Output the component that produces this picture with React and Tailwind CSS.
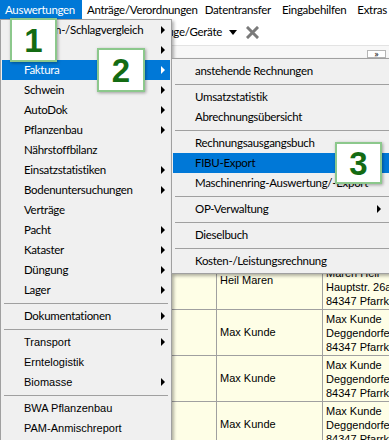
import React from "react";

const SEGOE = "font-['Lato','Noto_Sans',sans-serif] text-[11.5px] tracking-[-0.3px]";
const TAHOMA = "font-['Liberation_Sans',Arial,sans-serif] text-[11px]";

const mainItems = [
  { t: "Flächen-/Schlagvergleich", a: true },
  { t: "Rind", a: true },
  { t: "Faktura", a: true, hl: true },
  { t: "Schwein", a: true },
  { t: "AutoDok", a: true },
  { t: "Pflanzenbau", a: true },
  { t: "Nährstoffbilanz" },
  { t: "Einsatzstatistiken", a: true },
  { t: "Bodenuntersuchungen", a: true },
  { t: "Verträge" },
  { t: "Pacht", a: true },
  { t: "Kataster", a: true },
  { t: "Düngung", a: true },
  { t: "Lager", a: true },
  "sep",
  { t: "Dokumentationen", a: true },
  "sep",
  { t: "Transport", a: true, tah: true },
  { t: "Erntelogistik", tah: true },
  { t: "Biomasse", a: true, tah: true },
  "sep",
  { t: "BWA Pflanzenbau", tah: true },
  { t: "PAM-Anmischreport", tah: true },
];

const subItems = [
  { t: "anstehende Rechnungen" },
  "sep",
  { t: "Umsatzstatistik" },
  { t: "Abrechnungsübersicht" },
  "sep",
  { t: "Rechnungsausgangsbuch" },
  { t: "FIBU-Export", hl: true },
  { t: "Maschinenring-Auswertung/-Export" },
  "sep",
  { t: "OP-Verwaltung", a: true },
  "sep",
  { t: "Dieselbuch" },
  "sep",
  { t: "Kosten-/Leistungsrechnung" },
];

function Arrow({ white, sub }) {
  return (
    <span
      className={`absolute top-[6px] w-0 h-0 border-y-[4px] border-y-transparent border-l-[4px] ${
        white ? "border-l-white" : "border-l-black"
      } ${sub ? "left-[204px]" : "left-[159px]"}`}
    />
  );
}

function MenuList({ items, sub }) {
  return items.map((it, i) =>
    it === "sep" ? (
      <div key={i} className="h-[6px] flex items-center px-[2px]">
        <div className="h-px w-full bg-[#a0a0a0]" />
      </div>
    ) : (
      <div
        key={i}
        className={`relative h-[20px] flex items-center pl-[22px] whitespace-nowrap ${
          it.tah ? TAHOMA : SEGOE
        } ${it.hl ? "bg-[#0078d7]" : ""} ${
          it.hl && !sub ? "text-white" : "text-black"
        }`}
      >
        {it.t}
        {it.a && <Arrow white={it.hl && !sub} sub={sub} />}
      </div>
    )
  );
}

function Badge({ n, cls }) {
  return (
    <div
      className={`absolute ${cls} bg-white border-2 border-[#8cc88c] shadow-[1px_1px_3px_rgba(0,0,0,0.35)] flex items-center justify-center font-['Liberation_Sans',Arial,sans-serif] font-bold text-[33px] leading-none text-[#136b13]`}
    >
      {n}
    </div>
  );
}

function Row({ h, c2, lines }) {
  return (
    <div className={`flex border-b border-[#a0a0a0] ${h}`}>
      <div className="w-[217px] shrink-0 border-r border-[#a0a0a0]" />
      <div className="w-[106px] shrink-0 border-r border-[#a0a0a0] flex items-center pl-[3px] whitespace-nowrap">
        {c2}
      </div>
      <div className="flex-1 min-w-0 flex flex-col justify-center pl-[3px] leading-[14px] whitespace-nowrap overflow-hidden">
        {lines.map((l, i) => (
          <div key={i}>{l}</div>
        ))}
      </div>
    </div>
  );
}

export default function App() {
  const addr = ["Max Kunde", "Deggendorfer Str. 1", "84347 Pfarrkirchen"];
  return (
    <div className="relative w-[389px] h-[440px] overflow-hidden bg-white text-black">
      {/* menubar */}
      <div className={`flex h-[19px] items-center ${SEGOE} whitespace-nowrap`}>
        <div className="h-full flex items-center bg-[#0078d7] text-white pl-[5px] pr-[7px]">
          Auswertungen
        </div>
        <div className="pl-[5px] pr-[2px]">Anträge/Verordnungen</div>
        <div className="pl-[5px] pr-[6px]">Datentransfer</div>
        <div className="pl-[5px] pr-[6px]">Eingabehilfen</div>
        <div className="pl-[5px] pr-[6px]">Extras</div>
      </div>
      {/* toolbar */}
      <div className={`h-[26px] flex items-center ${SEGOE}`}>
        <div className="w-[222px] shrink-0 flex justify-end whitespace-nowrap">
          Fahrzeuge/Geräte
        </div>
        <span className="ml-[7px] w-0 h-0 border-x-[4px] border-x-transparent border-t-[5px] border-t-black" />
        <svg className="ml-[9px]" width="13" height="13" viewBox="0 0 13 13">
          <path d="M2 2 L11 11 M11 2 L2 11" stroke="#7a7a7a" strokeWidth="3" strokeLinecap="square" />
        </svg>
      </div>
      {/* strip */}
      <div className="h-[14px] border-t border-[#e3e3e3] border-b border-b-[#a0a0a0] bg-[#f7f7f7] flex justify-end items-end pr-[3px]">
        <div className="w-[19px] h-[8px] border border-[#b5b5b5] bg-white text-[8px] leading-[6px] text-center">»</div>
      </div>
      {/* table */}
      <div className={`bg-[#fefee6] ${TAHOMA}`}>
        <div className="h-[21px] border-b border-[#a0a0a0] bg-[#f0f0f0]" />
        <Row h="h-[57px]" c2="" lines={[]} />
        <Row h="h-[57px]" c2="" lines={[]} />
        <Row h="h-[57px]" c2="" lines={[]} />
        <Row
          h="h-[59px]"
          c2="Heil Maren"
          lines={["Heil Maren", "Maren Heil", "Hauptstr. 26a", "84347 Pfarrkirchen"]}
        />
        <Row h="h-[46px]" c2="Max Kunde" lines={addr} />
        <Row h="h-[46px]" c2="Max Kunde" lines={addr} />
        <Row h="h-[46px]" c2="Max Kunde" lines={addr} />
      </div>

      {/* main dropdown */}
      <div className="absolute left-0 top-[19px] w-[172px] h-[440px] bg-[#f0f0f0] border border-[#a0a0a0] px-px shadow-[2px_2px_3px_rgba(0,0,0,0.3)]">
        <MenuList items={mainItems} />
      </div>

      {/* submenu */}
      <div className="absolute left-[171px] top-[58px] w-[222px] bg-[#f0f0f0] border border-[#a0a0a0] px-px pt-[2px] pb-[2px] shadow-[2px_2px_3px_rgba(0,0,0,0.3)]">
        <MenuList items={subItems} sub />
      </div>

      <Badge n="1" cls="left-[10px] top-[18px] w-[47px] h-[44px]" />
      <Badge n="2" cls="left-[97px] top-[48px] w-[48px] h-[44px]" />
      <Badge n="3" cls="left-[335px] top-[142px] w-[47px] h-[42px]" />
    </div>
  );
}
